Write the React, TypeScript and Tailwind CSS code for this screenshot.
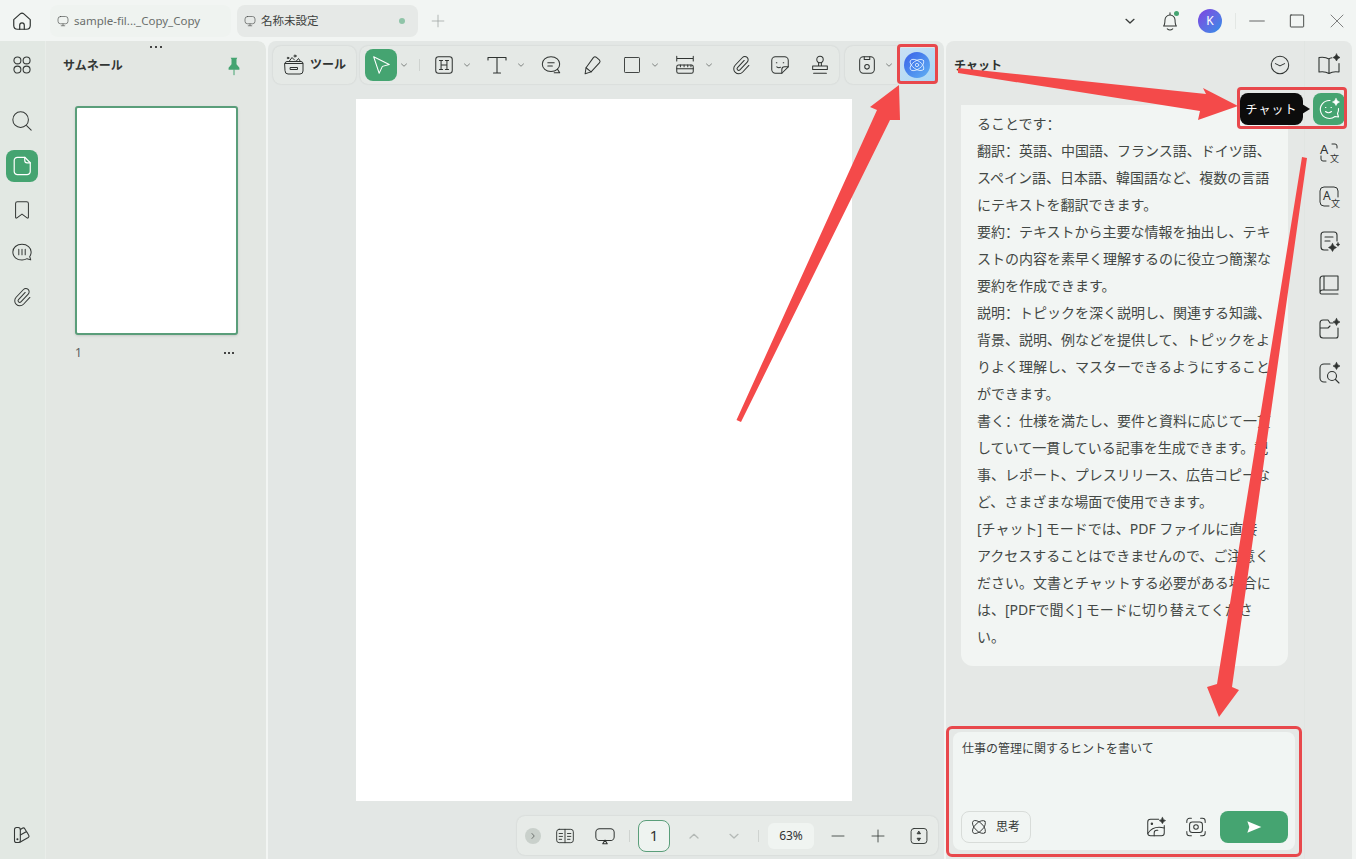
import React from "react"

const FONT = '"Noto Sans", "Noto Sans CJK JP", sans-serif'

function Ico({ size = 24, sw = 1.3, className = "", children }: { size?: number; sw?: number; className?: string; children: React.ReactNode }) {
  return (
    <svg viewBox="0 0 24 24" width={size} height={size} fill="none" stroke="currentColor" strokeWidth={sw} strokeLinecap="round" strokeLinejoin="round" className={"shrink-0 " + className}>
      {children}
    </svg>
  )
}

// four point star used all over the AI icons
function Spark({ x, y, r = 3 }: { x: number; y: number; r?: number }) {
  const k = r * 0.22
  return <path d={`M${x} ${y - r}Q${x + k} ${y - k} ${x + r} ${y}Q${x + k} ${y + k} ${x} ${y + r}Q${x - k} ${y + k} ${x - r} ${y}Q${x - k} ${y - k} ${x} ${y - r}Z`} fill="currentColor" stroke="currentColor" strokeWidth={0.6} />
}

function Chev({ dir = "down", className = "text-[#6b706d]", size = 12 }: { dir?: "down" | "up" | "right"; className?: string; size?: number }) {
  const d = dir === "down" ? "M6 9.5l6 5.5 6-5.5" : dir === "up" ? "M6 15l6-5.5 6 5.5" : "M9.5 6l5.5 6-5.5 6"
  return (
    <Ico size={size} sw={2} className={className}>
      <path d={d} />
    </Ico>
  )
}

const Clip = ({ size = 22 }: { size?: number }) => (
  <Ico size={size} sw={1.1}>
    <path d="M15.5 7l-7.300 7.800a1.800 1.800 0 0 0 2.600 2.500l8-8.500a3.600 3.600 0 1 0-5.200-5l-8 8.500a5.500 5.500 0 1 0 8 7.600l7-7.400" />
  </Ico>
)

function Slot({ className = "", children }: { className?: string; children: React.ReactNode }) {
  return <div className={"flex w-[24px] shrink-0 justify-center " + className}>{children}</div>
}

function ChevSlot({ className = "" }: { className?: string }) {
  return (
    <div className={"flex w-[14px] shrink-0 justify-center " + className}>
      <Chev size={10} />
    </div>
  )
}

function Tab({ name, active }: { name: string; active?: boolean }) {
  return (
    <div className={"flex h-[32px] w-[181px] items-center rounded-lg pl-[7px] pr-[13px] " + (active ? "bg-[#e6e9e7] text-[#3c3f3d]" : "bg-[#eff3f0] text-[#6a6e6c]")}>
      <Ico size={12} className="text-[#4a4d4b]">
        <rect x="2" y="3" width="20" height="14.5" rx="5" />
        <path d="M12 18v3M8.5 21.5h7" />
      </Ico>
      <span className="ml-[5px] flex-1 whitespace-nowrap text-[11.5px]">{name}</span>
      {active && <span className="h-[6px] w-[6px] rounded-full bg-[#8fc4a8]" />}
    </div>
  )
}

function TopBar() {
  return (
    <div className="flex h-[41px] items-center text-[#2f3331]">
      <div className="flex w-[50px] justify-center pr-[6px]">
        <Ico size={22}>
          <path d="M3 10.5l7-6.3q2-1.7 4 0l7 6.3V17q0 4-4 4H7q-4 0-4-4z" />
          <path d="M9.5 21v-4.5q0-2.5 2.5-2.5t2.5 2.5V21" />
        </Ico>
      </div>
      <Tab name="sample-fil..._Copy_Copy" />
      <div className="ml-[6px]">
        <Tab name="名称未設定" active />
      </div>
      <div className="ml-[13px] text-[#9a9f9c]">
        <Ico size={14} sw={1.2}>
          <path d="M12 2v20M2 12h20" />
        </Ico>
      </div>
      <div className="ml-auto flex items-center">
        <Chev size={16} className="text-[#3a3d3b]" />
        <div className="relative ml-[21px]">
          <Ico size={22} sw={1.1}>
            <path d="M5 17.5c1.5-1.5 1.5-3 1.5-6.5a5.5 5.5 0 0 1 11 0c0 3.500 0 5 1.500 6.500z" />
            <path d="M12 3v2M9 20.500q3 2.500 6 0" />
          </Ico>
          <span className="absolute right-[2px] top-[1px] h-[5px] w-[5px] rounded-full bg-[#45a471]" />
        </div>
        <div className="ml-[17px] flex h-[24px] w-[24px] items-center justify-center rounded-full bg-gradient-to-br from-[#7a3fe0] to-[#1d8ee8] text-[12px] text-white">K</div>
        <div className="ml-[13px] h-[16px] w-px bg-[#e3e7e4]" />
        <div className="ml-[13px]">
          <Ico size={16} sw={1.1}>
            <path d="M1 12h22" />
          </Ico>
        </div>
        <div className="ml-[24px]">
          <Ico size={16} sw={1.3}>
            <rect x="2" y="3" width="20" height="18" rx="1" />
          </Ico>
        </div>
        <div className="ml-[24px] mr-[11px] text-[#555]">
          <Ico size={16} sw={1.1}>
            <path d="M3 3l18 18M21 3L3 21" />
          </Ico>
        </div>
      </div>
    </div>
  )
}

function LeftRail() {
  return (
    <div className="flex w-[46px] shrink-0 flex-col items-center border-r border-[#e9ede9] bg-[#e2e8e3] pb-[14px] pr-[2px] pt-[13px] text-[#343836]">
      <Ico size={22} sw={1.2}>
        <circle cx="7" cy="7" r="3.800" />
        <circle cx="17" cy="7" r="3.800" />
        <circle cx="7" cy="17" r="3.800" />
        <circle cx="17" cy="17" r="3.800" />
      </Ico>
      <div className="mt-[34px]">
        <Ico size={22} sw={1.1}>
          <circle cx="10.500" cy="10.500" r="8.500" />
          <path d="M17 17l5 5" />
        </Ico>
      </div>
      <div className="mt-[18px] flex h-[32px] w-[32px] shrink-0 items-center justify-center rounded-lg bg-[#45a471] text-white">
        <Ico size={22}>
          <path d="M7 2.500h8l6 6V18a3.500 3.500 0 0 1-3.500 3.500H7A3.500 3.500 0 0 1 3.500 18V6A3.500 3.500 0 0 1 7 2.500z" />
          <path d="M15 2.500V6a2.500 2.500 0 0 0 2.500 2.500H21" />
        </Ico>
      </div>
      <div className="mt-[17px]">
        <Ico size={22} sw={1.1}>
          <path d="M7 3h10q2 0 2 2v15q0 1.500-1.500.5L12 16.500l-5.500 4q-1.500 1-1.500-.5V5q0-2 2-2z" />
        </Ico>
      </div>
      <div className="mt-[21px]">
        <Ico size={22} sw={1.1}>
          <path d="M12 2.500c5.800 0 10 3.800 10 8.500 0 1.800-.6 3.500-1.600 4.800l1.100 3.700-4-1.300c-1.700 1-3.500 1.500-5.500 1.500-5.800 0-10-3.800-10-8.700S6.200 2.500 12 2.500z" />
          <path d="M8.500 8v6M12 8v6M15.500 8v6" />
        </Ico>
      </div>
      <div className="mt-[22px]">
        <Clip />
      </div>
      <div className="mt-auto">
        <Ico size={20}>
          <rect x="3" y="3" width="7" height="18" rx="2.500" />
          <path d="M10 5.500l3-1.800q1.500-.7 2.300.7l2 3.500M10 20.500l9.500-5.500q1.500-1 .7-2.500l-2-3.400q-.8-1.400-2.300-.5L10 12" />
          <circle cx="6.500" cy="17" r=".6" fill="currentColor" />
        </Ico>
      </div>
    </div>
  )
}

function Thumbs() {
  return (
    <div className="relative flex w-[220px] shrink-0 flex-col rounded-tr-lg bg-[#e3e7e3]">
      <div className="absolute left-[104px] top-[5px] flex gap-[3px]">
        <span className="h-[2px] w-[2px] bg-[#444]" />
        <span className="h-[2px] w-[2px] bg-[#444]" />
        <span className="h-[2px] w-[2px] bg-[#444]" />
      </div>
      <div className="flex h-[65px] items-start justify-between pl-[17px] pr-[22px] pt-[15px]">
        <span className="mt-[1px] text-[12px] font-bold leading-[18px] text-[#333735]">サムネール</span>
        <svg viewBox="0 0 24 24" width={20} height={20} className="text-[#45a471]">
          <path d="M8 2h8l-1 2v6l3.500 4v2.500H5.500V14L9 10V4z" fill="currentColor" />
          <path d="M12 16v7" stroke="currentColor" strokeWidth={1.2} />
        </svg>
      </div>
      <div className="ml-[29px] h-[229px] w-[163px] rounded-[3px] border-2 border-[#5a9e7a] bg-white shadow-sm" />
      <div className="ml-[29px] mt-[9px] flex w-[160px] items-center justify-between text-[12px] leading-[18px] text-[#5c605e]">
        <span>1</span>
        <span className="flex gap-[2px] pr-[1px]">
          <i className="h-[2px] w-[2px] bg-[#444]" />
          <i className="h-[2px] w-[2px] bg-[#444]" />
          <i className="h-[2px] w-[2px] bg-[#444]" />
        </span>
      </div>
    </div>
  )
}

function Toolbar() {
  return (
    <div className="flex h-[38px] items-center pl-[5px] text-[#2f3331]">
      <div className="flex h-[38px] w-[83px] items-center rounded-lg bg-[#e5e9e6] pl-[9px] shadow-[0_0_2px_rgba(0,0,0,0.12)]">
        <Ico size={24} sw={1}>
          <path d="M3 10.500h18V18a3 3 0 0 1-3 3H6a3 3 0 0 1-3-3z" />
          <path d="M3 10.500Q3 8.500 5 8.500h14q2 0 2 2" />
          <path d="M8.500 14.500h7v2h-7z" />
          <path d="M7 8.500l3-4 2.500 2.500M14 8.500l2.500-3 2 3" />
          <circle cx="13" cy="3" r="1" />
          <circle cx="6" cy="5" r=".8" />
        </Ico>
        <span className="ml-[4px] text-[12px] font-bold text-[#2f3331]">ツール</span>
      </div>
      <div className="ml-[4px] flex h-[38px] w-[479px] items-center rounded-lg bg-[#e5e9e6] pl-[5px] shadow-[0_0_2px_rgba(0,0,0,0.12)]">
        <div className="flex h-[32px] w-[32px] items-center justify-center rounded-lg bg-[#45a471] text-white">
          <Ico size={22} sw={1.1}>
            <path d="M4 3l17 8.500-7.500 2L10 21z" />
          </Ico>
        </div>
        <ChevSlot />
        <div className="ml-[8px] h-[12px] w-px bg-[#cfd3d0]" />
        <Slot className="ml-[12px]">
          <Ico size={22} sw={1.1}>
            <rect x="3" y="3" width="18" height="18" rx="3" />
            <path d="M7 7h3.500M7 17h3.500M13.500 7H17M13.500 17H17M8.800 7v10M15.200 7v10M8.800 12h6.400" />
          </Ico>
        </Slot>
        <ChevSlot className="ml-[4px]" />
        <Slot className="ml-[11px]">
          <Ico size={24} sw={1.1}>
            <path d="M3 7V4.500h18V7M12 4.500V20M8.500 20h7" />
          </Ico>
        </Slot>
        <ChevSlot className="ml-[5px]" />
        <Slot className="ml-[11px]">
          <Ico size={22} sw={1.1}>
            <path d="M12 3c5.500 0 9.500 3.500 9.500 8s-4 8-9.500 8c-5.500 0-9.500-3.500-9.500-8S6.500 3 12 3z" />
            <path d="M19 16.500l2.500 4h-6M8.500 9.500h7M8.500 13h5" />
          </Ico>
        </Slot>
        <Slot className="ml-[17px]">
          <Ico size={22} sw={1.1}>
            <path d="M13.500 4q1.500-1.500 3-.5l3.500 3q1.500 1.500.3 3L11 19.500 5.500 15z" />
            <path d="M5.500 15l-1 6.500 6.500-2" />
          </Ico>
        </Slot>
        <Slot className="ml-[16px]">
          <Ico size={18} sw={1.2}>
            <rect x="2" y="2" width="20" height="20" rx="1" />
          </Ico>
        </Slot>
        <ChevSlot className="ml-[4px]" />
        <Slot className="ml-[11px]">
          <Ico size={22} sw={1.1}>
            <path d="M3 2.500v5M21 2.500v5M3 5h18" />
            <rect x="3" y="12" width="18" height="9" rx="2" />
            <path d="M3 16h18M7 12v2M11 12v2M15 12v2M18.500 12v2" />
          </Ico>
        </Slot>
        <ChevSlot className="ml-[5px]" />
        <Slot className="ml-[13px]">
          <Clip />
        </Slot>
        <Slot className="ml-[15px]">
          <Ico size={22} sw={1.1}>
            <path d="M7 3h10a4 4 0 0 1 4 4v7l-7 7H7a4 4 0 0 1-4-4V7a4 4 0 0 1 4-4z" />
            <path d="M21 14h-4a3 3 0 0 0-3 3v4M8 9.500h.6M15.500 9.500h.6M8.500 14q2 1.500 4 .5" />
          </Ico>
        </Slot>
        <Slot className="ml-[16px]">
          <Ico size={22} sw={1.1}>
            <circle cx="12" cy="6" r="3.500" />
            <path d="M10.500 9.500V13M13.500 9.500V13M4 13h16v4H4zM5 21h14" />
          </Ico>
        </Slot>
      </div>
      <div className="ml-[6px] flex h-[38px] w-[52px] items-center rounded-l-lg bg-[#e5e9e6] pl-[11px] shadow-[0_0_2px_rgba(0,0,0,0.12)]">
        <Ico size={22} sw={1.1}>
          <rect x="4" y="3" width="16" height="18" rx="4" />
          <path d="M9 3v3h6V3" />
          <circle cx="12" cy="14" r="2.500" />
        </Ico>
        <ChevSlot className="ml-[4px]" />
      </div>
      <div className="ml-[2px] flex h-[34px] w-[36px] items-center justify-center bg-gradient-to-br from-[#c9e0f4] to-[#a9d8f5]">
        <div className="flex h-[26px] w-[26px] items-center justify-center rounded-full bg-gradient-to-br from-[#3c5fe8] to-[#62b0f2] text-[#dcecff]">
          <Ico size={20} sw={1}>
            <ellipse cx="12" cy="12" rx="9.500" ry="5" transform="rotate(35 12 12)" />
            <ellipse cx="12" cy="12" rx="9.500" ry="5" transform="rotate(-35 12 12)" />
            <circle cx="12" cy="12" r="2" />
          </Ico>
        </div>
      </div>
    </div>
  )
}

function BottomBar() {
  return (
    <div className="ml-[249px] flex h-[39px] w-[421px] items-center rounded-lg bg-[#e7ebe8] pl-[8px] text-[#2f3331] shadow-[0_0_2px_rgba(0,0,0,0.12)]">
      <div className="flex h-[16px] w-[16px] items-center justify-center rounded-full bg-[#c9d0cb]">
        <Chev dir="right" size={10} className="text-[#5a5f5c]" />
      </div>
      <div className="ml-[14px]">
        <Ico size={20} sw={1.1}>
          <rect x="2" y="4" width="20" height="16" rx="3" />
          <path d="M12 4v16M5 9h4M5 12.500h4M5 16h3M15 9h4M15 12.500h4M15 16h3" />
        </Ico>
      </div>
      <div className="ml-[19px]">
        <Ico size={22} sw={1.1}>
          <rect x="2" y="4" width="20" height="13" rx="4" />
          <path d="M12 16.500l-2.500 4h5z" />
        </Ico>
      </div>
      <div className="ml-[13px] h-[12px] w-px bg-[#cfd3d0]" />
      <div className="ml-[8px] flex h-[32px] w-[32px] items-center justify-center rounded-lg border border-[#5a9e7a] bg-[#eef3f0] text-[15px] text-[#333]">1</div>
      <div className="ml-[16px]">
        <Chev dir="up" size={16} className="text-[#b4b9b6]" />
      </div>
      <div className="ml-[24px]">
        <Chev size={16} className="text-[#b4b9b6]" />
      </div>
      <div className="ml-[16px] h-[12px] w-px bg-[#cfd3d0]" />
      <div className="ml-[9px] flex h-[26px] w-[46px] items-center justify-center rounded-md bg-[#f0f4f1] text-[12px] text-[#333]">63%</div>
      <div className="ml-[16px]">
        <Ico size={16} sw={1.2}>
          <path d="M3 12h18" />
        </Ico>
      </div>
      <div className="ml-[24px]">
        <Ico size={16} sw={1.2}>
          <path d="M3 12h18M12 3v18" />
        </Ico>
      </div>
      <div className="ml-[23px]">
        <Ico size={20} sw={1.1}>
          <rect x="2.500" y="3" width="19" height="18" rx="3.500" />
          <path d="M12 6.500l1.800 2.800h-3.600zM12 17.500l1.800-2.800h-3.600z" fill="currentColor" />
        </Ico>
      </div>
    </div>
  )
}

const CHAT_LINES = [
  ["ることです", ""],
  ["翻訳", "英語、中国語、フランス語、ドイツ語、"],
  ["スペイン語、日本語、韓国語など、複数の言語"],
  ["にテキストを翻訳できます。"],
  ["要約", "テキストから主要な情報を抽出し、テキ"],
  ["ストの内容を素早く理解するのに役立つ簡潔な"],
  ["要約を作成できます。"],
  ["説明", "トピックを深く説明し、関連する知識、"],
  ["背景、説明、例などを提供して、トピックをよ"],
  ["りよく理解し、マスターできるようにすること"],
  ["ができます。"],
  ["書く", "仕様を満たし、要件と資料に応じて一貫"],
  ["していて一貫している記事を生成できます。記"],
  ["事、レポート、プレスリリース、広告コピーな"],
  ["ど、さまざまな場面で使用できます。"],
  ["[チャット] モードでは、PDF ファイルに直接"],
  ["アクセスすることはできませんので、ご注意く"],
  ["ださい。文書とチャットする必要がある場合に"],
  ["は、[PDFで聞く] モードに切り替えてくださ"],
  ["い。"],
]

function ChatColumn() {
  return (
    <div className="flex w-[358px] shrink-0 flex-col pb-[9px]">
      <div className="flex h-[64px] items-start justify-between pl-[8px] pr-[13px] pt-[15px] text-[#2f3331]">
        <span className="mt-[1px] text-[12px] font-bold leading-[18px]">チャット</span>
        <div className="mt-[-2px]">
          <Ico size={22} sw={1.1}>
            <circle cx="12" cy="12" r="9.500" />
            <path d="M7 10.500l5 2.500 5-2.500" />
          </Ico>
        </div>
      </div>
      <div className="ml-[15px] w-[327px] rounded-b-xl bg-[#f2f5f3] pb-[16px] pl-[16px] pt-[5px] text-[14px] leading-[27px] text-[#434845]">
        {CHAT_LINES.map((line, i) => (
          <div key={i} className="whitespace-pre">
            {line[0]}
            {line.length > 1 && <span className="font-['Noto_Sans_CJK_SC']">：</span>}
            {line[1]}
          </div>
        ))}
      </div>
      <div className="ml-[7px] mt-auto flex h-[118px] w-[342px] flex-col rounded-lg bg-[#f1f5f3] pb-[7px] pl-[8px] pr-[7px] pt-[9px]">
        <div className="ml-[1px] text-[12px] leading-[16px] text-[#3b403d]">仕事の管理に関するヒントを書いて</div>
        <div className="mt-auto flex items-center text-[#333735]">
          <div className="flex h-[32px] w-[70px] items-center rounded-lg border border-[#d8dcd9] pl-[8px]">
            <Ico size={18} sw={1.2}>
              <ellipse cx="12" cy="12" rx="11" ry="5.500" transform="rotate(45 12 12)" />
              <ellipse cx="12" cy="12" rx="11" ry="5.500" transform="rotate(-45 12 12)" />
            </Ico>
            <span className="ml-[8px] text-[12px]">思考</span>
          </div>
          <div className="ml-[114px]">
            <Ico size={22} sw={1.1}>
              <path d="M15 3.500H6A3 3 0 0 0 3 6.500v12a3 3 0 0 0 3 3h12a3 3 0 0 0 3-3v-8" />
              <path d="M3 19q6-9 18-6M10 21.500v-3a3 3 0 0 1 3-3h1" />
              <circle cx="7.500" cy="8.500" r=".8" fill="currentColor" />
              <Spark x={19} y={5} r={3.500} />
            </Ico>
          </div>
          <div className="ml-[18px]">
            <Ico size={22} sw={1.1}>
              <path d="M2 7V5.500A3 3 0 0 1 5 2.500h2M17 2.500h2a3 3 0 0 1 3 3V7M2 17v1.500a3 3 0 0 0 3 3h2M17 21.500h2a3 3 0 0 0 3-3V17" />
              <rect x="5" y="6.500" width="14" height="11.500" rx="3" />
              <circle cx="12" cy="12" r="2.500" />
            </Ico>
          </div>
          <div className="ml-[13px] flex h-[32px] w-[68px] items-center justify-center rounded-lg bg-[#45a471] text-white">
            <svg viewBox="0 0 24 24" width={16} height={16}>
              <path d="M2 3.500L23 12 2 20.500 5 12z" fill="currentColor" />
            </svg>
          </div>
        </div>
      </div>
    </div>
  )
}

function RightRail() {
  const row = "flex h-[44px] items-center justify-center"
  return (
    <div className="flex w-[48px] shrink-0 flex-col border-l border-[#e1e5e2] pt-[2px] text-[#2f3331]">
      <div className={row}>
        <Ico size={24} sw={1.1}>
          <path d="M15 4.800Q13 5 12 6 8 3.500 2 4.500V19q6-1 10 1.500 4-2.500 10-1.500V10.500M12 6v14.500" />
          <Spark x={19.500} y={4.500} r={3.500} />
        </Ico>
      </div>
      <div className={"relative " + row}>
        <div className="absolute right-[49px] top-[6px] flex h-[32px] w-[63px] items-center justify-center rounded-lg bg-[#0c0c0c] pt-[1px] text-[12px] tracking-[1px] text-white">
          チャット
          <span className="absolute right-[-7px] top-[11px] h-0 w-0 border-y-[5px] border-l-[8px] border-y-transparent border-l-[#0c0c0c]" />
        </div>
        <div className="flex h-[32px] w-[32px] items-center justify-center rounded-lg bg-[#45a471] text-white">
          <Ico size={24} sw={1.1}>
            <path d="M13 3.500a9 9 0 1 0 5 16l3.500.5-1-3.500a9 9 0 0 0 1-5" />
            <path d="M8.500 10.500h.4M14 10.500h.4M8.500 14.500q3 2.500 6 0" />
            <Spark x={19} y={5} r={3.500} />
          </Ico>
        </div>
      </div>
      <div className={row}>
        <svg viewBox="0 0 24 24" width={24} height={24} fill="none" stroke="currentColor" strokeWidth={1} strokeLinecap="round" className="overflow-visible">
          <path d="M15 3h3a2 2 0 0 1 2 2v2M4 15v3a2 2 0 0 0 2 2h3" />
          <text x="3" y="13" fontSize="13" fill="currentColor" stroke="none">A</text>
          <text x="13" y="21" fontSize="9" fill="currentColor" stroke="none">文</text>
        </svg>
      </div>
      <div className={row}>
        <svg viewBox="0 0 24 24" width={24} height={24} fill="none" stroke="currentColor" strokeWidth={1} strokeLinecap="round" className="overflow-visible">
          <path d="M12 21H7a4 4 0 0 1-4-4V6a4 4 0 0 1 4-4h10a4 4 0 0 1 4 4v6" />
          <text x="6" y="15" fontSize="12" fill="currentColor" stroke="none">A</text>
          <text x="14" y="22" fontSize="9" fill="currentColor" stroke="none">文</text>
        </svg>
      </div>
      <div className={row}>
        <Ico size={24} sw={1.1}>
          <path d="M11 21H7a3 3 0 0 1-3-3V6a3 3 0 0 1 3-3h10a3 3 0 0 1 3 3v6" />
          <path d="M8 8h8M8 12h5" />
          <Spark x={15.500} y={18.500} r={4} />
          <Spark x={21} y={15.500} r={1.800} />
        </Ico>
      </div>
      <div className={row}>
        <Ico size={24} sw={1.1}>
          <path d="M3 19.500V6a3 3 0 0 1 3-3h15v14H5.500A2.500 2.500 0 0 0 3 19.500 1.500 1.500 0 0 0 4.500 21H21M7 3v14" />
        </Ico>
      </div>
      <div className={row}>
        <Ico size={24} sw={1.1}>
          <path d="M16 6h-3l-2-3H6a3 3 0 0 0-3 3v12a3 3 0 0 0 3 3h13a2 2 0 0 0 2-2v-8M3 11h8l2-2" />
          <Spark x={19.500} y={5} r={3.500} />
        </Ico>
      </div>
      <div className={row}>
        <Ico size={24} sw={1.1}>
          <path d="M13 3H7a4 4 0 0 0-4 4v10a4 4 0 0 0 4 4h2" />
          <circle cx="15" cy="15" r="4.500" />
          <path d="M18.500 18.500L22 22" />
          <Spark x={19.500} y={5} r={3.500} />
        </Ico>
      </div>
    </div>
  )
}

// the red marks somebody painted on top of the screenshot
function Annotations() {
  return (
    <>
      <svg width={1356} height={859} viewBox="0 0 1356 859" className="pointer-events-none absolute left-0 top-0">
        <polygon points="736.500,420 741,422 890,120 900,120 899,85 870,107 877,110" fill="#f44a4a" />
        <polygon points="958,68 1206,94 1203,88 1238,106 1198,120 1200,111 958,73" fill="#f44a4a" />
        <polygon points="1302,157 1307,158 1232,687 1239,690 1219,717 1207,687 1217,684" fill="#f44a4a" />
      </svg>
      <div className="pointer-events-none absolute left-[897px] top-[44px] h-[40px] w-[41px] rounded-[4px] border-[3px] border-[#e8484c]" />
      <div className="pointer-events-none absolute left-[1237px] top-[87px] h-[42px] w-[110px] rounded-[4px] border-[3px] border-[#e8484c]" />
      <div className="pointer-events-none absolute left-[946px] top-[726px] h-[131px] w-[356px] rounded-[6px] border-[3px] border-[#e8484c]" />
    </>
  )
}

export default function App() {
  return (
    <div className="relative flex h-[859px] w-[1356px] flex-col overflow-hidden bg-[#f2f5f3]" style={{ fontFamily: FONT }}>
      <TopBar />
      <div className="flex min-h-0 flex-1 gap-[2px] pr-[4px]">
        <div className="flex w-[266px] shrink-0 overflow-hidden rounded-tr-lg">
          <LeftRail />
          <Thumbs />
        </div>
        <div className="flex w-[676px] shrink-0 flex-col rounded-t-lg bg-[#e3e7e5] pt-[5px]">
          <Toolbar />
          <div className="ml-[88px] mt-[15px] h-[702px] w-[496px] bg-white" />
          <div className="mt-[15px]">
            <BottomBar />
          </div>
        </div>
        <div className="flex flex-1 rounded-t-lg bg-[#e5e8e6]">
          <ChatColumn />
          <RightRail />
        </div>
      </div>
      <Annotations />
    </div>
  )
}
